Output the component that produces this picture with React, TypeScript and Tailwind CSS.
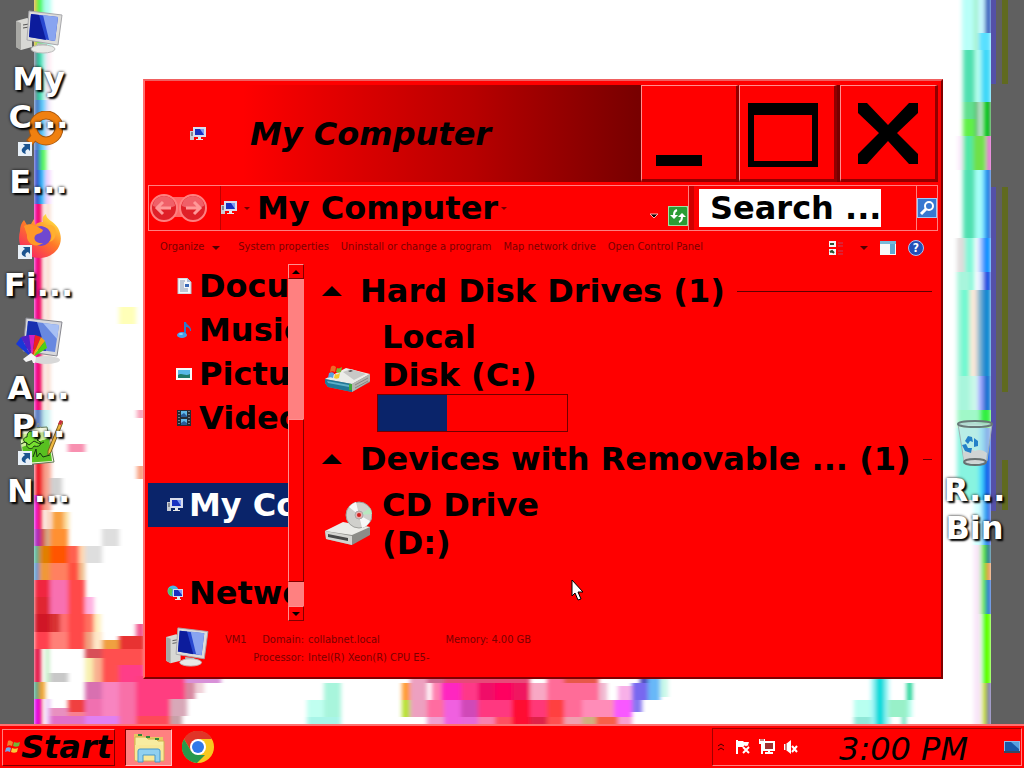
import type { ReactNode } from "react";

type Block = [number, number, number, number, string];

// x, y, width, height, colour
const blocks: Block[] = [
    // left edge
    [33, 0, 3, 50, "#ff9030"], [36, 0, 7, 50, "#40f850"], [43, 0, 8, 50, "#b0fff0"],
    [34, 50, 3, 50, "#602880"], [37, 50, 6, 50, "#20d8a8"], [43, 50, 3, 50, "#c0ffff"], [46, 50, 4, 50, "#ffe0ec"],
    [34, 100, 6, 50, "#4070c0"], [40, 100, 6, 50, "#60d0ff"], [46, 100, 4, 50, "#f0e0f8"],
    [34, 150, 6, 54, "#3444c8"], [40, 150, 6, 20, "#50f850"], [40, 170, 5, 34, "#30c0ff"], [46, 170, 4, 34, "#f0c8ff"],
    [34, 204, 2, 206, "#f010d0"], [36, 204, 6, 206, "#f00058"], [46, 204, 4, 206, "#f8d4c4"],
    [34, 410, 8, 22, "#5878c0"], [42, 410, 8, 22, "#c8f0f0"],
    [35, 432, 8, 78, "#f01020"], [43, 432, 8, 78, "#f8a490"],
    [34, 495, 3, 34, "#e800f0"], [37, 495, 5, 34, "#f01030"], [46, 510, 4, 19, "#f8c8b0"],
    [34, 529, 6, 18, "#a820c0"], [40, 529, 5, 18, "#d84030"], [45, 529, 5, 18, "#d0b090"], [50, 529, 18, 18, "#ff9030"],
    [34, 546, 5, 18, "#20b090"], [39, 546, 11, 18, "#e08000"], [50, 546, 18, 18, "#ff5500"], [68, 546, 11, 18, "#ff6050"], [79, 546, 6, 18, "#ffd8b0"],
    [34, 563, 5, 18, "#3090d0"], [39, 563, 11, 18, "#f09838"], [50, 563, 18, 18, "#ff8060"], [68, 563, 11, 18, "#ff5040"], [79, 563, 6, 18, "#f0c090"],
    [34, 580, 16, 18, "#f02840"], [50, 580, 18, 35, "#f870b0"], [68, 580, 17, 69, "#ff4848"], [85, 597, 9, 18, "#ffb0e0"],
    [34, 597, 16, 18, "#e02830"], [34, 614, 16, 18, "#d01828"], [50, 614, 10, 18, "#d83030"], [60, 614, 8, 18, "#ff7070"],
    [85, 614, 9, 18, "#ff7060"], [94, 614, 7, 18, "#fff0c0"],
    [34, 632, 16, 17, "#ff4050"], [50, 632, 18, 17, "#ff8078"], [85, 632, 8, 17, "#f0a080"], [93, 632, 9, 17, "#ffe8c8"],
    [102, 640, 17, 9, "#f0a040"], [119, 636, 26, 13, "#e83030"], [136, 624, 9, 12, "#f05890"],
    [34, 649, 7, 33, "#e01040"], [46, 649, 3, 33, "#b0e8b0"], [85, 649, 17, 9, "#d85058"], [85, 658, 8, 24, "#f8f0b0"], [93, 658, 9, 24, "#f8b090"],
    [102, 649, 43, 33, "#ff5050"], [119, 665, 26, 17, "#ff3c88"], [50, 673, 18, 9, "#c8c8c8"],
    [34, 682, 5, 17, "#20a080"], [39, 682, 6, 17, "#f0a020"], [34, 699, 5, 30, "#e000f0"], [39, 699, 3, 30, "#f01050"], [46, 699, 4, 30, "#e8c0f8"],
    [85, 682, 17, 17, "#d870b0"], [102, 682, 17, 34, "#f884c0"], [119, 682, 17, 47, "#f870a8"], [136, 676, 49, 23, "#ff3c80"],
    [185, 679, 36, 4, "#d890d8"], [185, 683, 10, 16, "#d888a0"], [195, 683, 9, 10, "#f0d0d8"],
    [50, 708, 18, 8, "#e890c0"], [68, 700, 17, 12, "#f04040"], [68, 712, 17, 4, "#f88090"], [85, 699, 17, 17, "#f070b0"],
    [136, 699, 34, 17, "#ff3c80"], [170, 699, 17, 17, "#d8a8b8"], [50, 716, 35, 13, "#e070c8"], [85, 716, 34, 13, "#e080f0"],
    [136, 716, 34, 13, "#ff4858"], [170, 716, 12, 13, "#c8a0a8"],
    // loose specks
    [119, 307, 17, 17, "#ffffb8"], [68, 444, 17, 8, "#f890b0"], [137, 410, 8, 8, "#f8a0b8"], [137, 466, 8, 13, "#f8a080"],
    [50, 478, 12, 17, "#d0d0d0"], [52, 512, 12, 17, "#f8a040"], [64, 512, 5, 17, "#fce0a0"], [102, 529, 17, 17, "#dedede"], [85, 546, 17, 17, "#dedede"],
    // bottom strip
    [324, 683, 17, 34, "#a8f5dc"], [307, 700, 17, 17, "#c0fff0"], [307, 717, 34, 12, "#a8f5e8"],
    [402, 683, 8, 17, "#ff9a30"], [402, 700, 8, 17, "#b8e030"], [410, 679, 17, 38, "#eda0c0"], [427, 679, 17, 4, "#d06890"],
    [432, 683, 9, 17, "#ff80b0"], [441, 683, 20, 17, "#ff28c0"], [461, 683, 17, 17, "#ff3888"], [444, 679, 86, 4, "#e84878"],
    [478, 683, 17, 17, "#f01068"], [495, 683, 17, 17, "#ff0060"], [512, 683, 18, 17, "#f01860"], [530, 683, 17, 17, "#f8a8c4"],
    [547, 679, 52, 21, "#ff6c98"], [599, 683, 8, 17, "#f0b8d0"], [564, 679, 34, 4, "#e85848"], [618, 686, 14, 14, "#f8b0e8"],
    [632, 683, 16, 17, "#7868f0"], [648, 679, 12, 21, "#68b8f8"], [640, 679, 8, 4, "#5048c0"], [660, 679, 8, 18, "#c8f8e8"],
    [427, 700, 17, 17, "#ff6ca0"], [444, 700, 17, 29, "#f060e0"], [461, 700, 17, 17, "#d048b8"], [478, 700, 34, 17, "#ff3880"],
    [512, 700, 18, 29, "#ff1030"], [530, 700, 17, 17, "#ff3878"], [547, 700, 17, 17, "#ff4040"], [564, 700, 18, 17, "#ff6c98"],
    [582, 700, 32, 17, "#ff8cb8"], [614, 700, 18, 17, "#f858ff"], [632, 700, 10, 12, "#8878f0"],
    [427, 717, 17, 12, "#f0a0d0"], [461, 717, 17, 12, "#e868d8"], [478, 717, 17, 12, "#f880b0"], [495, 717, 17, 12, "#ff5060"],
    [530, 717, 17, 12, "#e02048"], [547, 717, 17, 12, "#ff5050"], [564, 717, 18, 12, "#f0a0b0"], [582, 717, 14, 12, "#d0b080"],
    [596, 717, 22, 12, "#f86048"], [618, 717, 14, 12, "#f8a0d0"],
    [854, 700, 58, 17, "#b8fff0"], [854, 717, 36, 12, "#90e8d8"], [871, 679, 18, 50, "#a0f8f8"], [875, 679, 10, 50, "#10dcdc"],
    [888, 700, 20, 17, "#98f0c8"], [907, 683, 5, 17, "#18d090"], [902, 717, 4, 12, "#60e0b8"],
    // right edge
    [962, 0, 12, 50, "#b8fff8"], [974, 0, 4, 50, "#a0f0c8"], [978, 0, 7, 33, "#c8f8ff"], [985, 0, 6, 33, "#0848b8"], [979, 33, 12, 17, "#58e0ff"],
    [963, 50, 12, 52, "#50e0b0"], [975, 50, 6, 52, "#b8fff0"], [981, 50, 10, 52, "#40d8f8"],
    [963, 102, 12, 17, "#60e090"], [975, 102, 4, 34, "#60b870"], [979, 102, 3, 34, "#e0f0f0"], [982, 102, 7, 34, "#10d020"], [989, 102, 2, 34, "#104820"],
    [963, 119, 12, 17, "#60f048"], [958, 136, 5, 34, "#fce8fc"], [963, 136, 12, 34, "#50e8a8"], [973, 136, 13, 34, "#70e048"], [987, 136, 4, 34, "#d828c0"],
    [963, 170, 12, 68, "#50e0b0"], [975, 170, 8, 68, "#a8fff8"], [983, 170, 4, 68, "#30b8ff"], [987, 170, 4, 68, "#0850d0"],
    [957, 238, 8, 34, "#e0dcdc"], [965, 238, 9, 52, "#80f8d8"], [978, 238, 4, 34, "#c0d8ff"], [982, 238, 9, 34, "#1090ff"], [978, 272, 5, 18, "#d8e8ff"], [983, 272, 8, 18, "#1048e0"],
    [957, 272, 13, 138, "#a8f5dc"], [961, 290, 8, 86, "#70f8d0"], [970, 290, 7, 86, "#fce8d8"], [977, 290, 5, 86, "#80b8d0"], [982, 290, 9, 86, "#1088d0"],
    [970, 376, 7, 34, "#c8f8e8"], [978, 376, 5, 34, "#a0a8ff"], [983, 376, 8, 34, "#1070d0"],
    [957, 410, 34, 18, "#a0f8c8"], [980, 410, 11, 18, "#30f040"], [957, 428, 22, 72, "#88f4e0"], [979, 428, 5, 72, "#40d8ff"], [984, 428, 7, 72, "#1058e8"],
    [974, 500, 8, 45, "#d0ffff"], [982, 500, 5, 45, "#40b8f8"], [987, 500, 4, 45, "#2040e0"],
    [974, 545, 7, 184, "#f8e4f8"], [981, 545, 5, 69, "#60f030"], [986, 545, 5, 18, "#106088"], [986, 563, 5, 17, "#e88848"], [986, 580, 5, 34, "#0850d0"],
    [982, 614, 9, 69, "#60ff00"], [982, 683, 5, 46, "#c8e010"], [987, 683, 4, 46, "#5030a8"],
];

// dark side panels, kept crisp on top of the smeared blocks
const panels: Block[] = [
    [0, 0, 34, 768, "#606060"], [991, 0, 33, 768, "#606060"],
    [991, 0, 5, 84, "#5450a8"], [991, 187, 5, 324, "#5450a8"],
    [1002, 0, 6, 84, "#606a20"], [1002, 187, 6, 205, "#606a20"], [1002, 460, 6, 50, "#606a20"],
];

const Wallpaper = () => {
    return (
        <svg
            className="absolute inset-0 h-full w-full"
            viewBox="0 0 1024 768"
            preserveAspectRatio="none"
            shapeRendering="crispEdges"
            aria-hidden="true"
        >
            <filter id="smear" x="0" y="0" width="1" height="1">
                <feGaussianBlur stdDeviation="2 0" />
            </filter>
            <g filter="url(#smear)">
                {blocks.map(([x, y, w, h, fill], i) => (
                    <rect key={i} x={x} y={y} width={w} height={h} fill={fill} />
                ))}
            </g>
            {panels.map(([x, y, w, h, fill], i) => (
                <rect key={i} x={x} y={y} width={w} height={h} fill={fill} />
            ))}
        </svg>
    );
};

const ComputerIcon = ({ className }: { className: string }) => {
    return (
        <svg className={className} viewBox="0 0 48 44" aria-hidden="true">
            <path d="M1 11l11-3 5 2v27l-11 3-5-3z" fill="#d8d8d4" />
            <path d="M1 11l5 2v27l-5-3z" fill="#a8a8a4" />
            <path d="M8 15l6-1M8 18l6-1" stroke="#555" />
            <path d="M22 33l10 1v5H22z" fill="#b9bab8" />
            <ellipse cx="28" cy="39" rx="12" ry="4" fill="#e9e9e6" stroke="#bbb" />
            <path d="M14 1l33 4-4 30-31-5z" fill="#dcdcda" stroke="#a8a8ac" />
            <path d="M16 4l27 3-3 24-26-4z" fill="#2848d0" />
            <path d="M28 5l15 2-3 24-6-1z" fill="#88a4f0" />
            <path d="M16 4l8 1 7 25-17-3z" fill="#0c1c9c" />
        </svg>
    );
};

const SmallComputerIcon = () => {
    return (
        <svg className="h-4 w-4 shrink-0" viewBox="0 0 16 16" aria-hidden="true">
            <path d="M0 5h4v9H0z" fill="#c8ccd4" />
            <path d="M1 7h2M1 9h2" stroke="#445" />
            <path d="M3 1h13v10H3z" fill="#d8dcec" />
            <path d="M5 3h9v6H5z" fill="#1830c0" />
            <path d="M10 3h4v6z" fill="#7c9cf4" />
            <path d="M8 11h3v2h2v1H6v-1h2z" fill="#e8e8e8" />
        </svg>
    );
};

const NetworkIcon = () => {
    return (
        <svg className="h-4 w-4 shrink-0" viewBox="0 0 16 16" aria-hidden="true">
            <circle cx="6" cy="6" r="5.500" fill="#48b8e8" />
            <path d="M2 3c3 0 4 2 3 4s1 3 0 4C2 10 0 7 2 3z" fill="#58c850" />
            <path d="M6 4h10v8H6z" fill="#d8dcec" />
            <path d="M7 5h8v6H7z" fill="#1830c0" />
            <path d="M11 5h4v5z" fill="#7c9cf4" />
            <path d="M10 12h3v2h1v1H8v-1h2z" fill="#e8e8e8" />
        </svg>
    );
};

const DocumentIcon = () => {
    return (
        <svg className="h-4 w-4 shrink-0" viewBox="0 0 16 16" aria-hidden="true">
            <path d="M2 0h9l4 4v12H2z" fill="#f4f6fa" stroke="#b8c0cc" />
            <path d="M11 0v4h4z" fill="#b0c0d8" />
            <path d="M4 3h5M4 5h4M4 7h4M4 9h4M4 11h8M4 13h8" stroke="#8898b0" />
            <path d="M9 6h4v3H9z" fill="#3868b8" />
        </svg>
    );
};

const MusicIcon = () => {
    return (
        <svg className="h-4 w-4 shrink-0" viewBox="0 0 16 16" aria-hidden="true">
            <path d="M8 0h2c0 3 6 4 5 9h-1c0-3-2-4-4-4v8H8z" fill="#3078c8" />
            <ellipse cx="6" cy="13" rx="5" ry="3" fill="#48a0e8" />
            <ellipse cx="5" cy="12" rx="2" ry="1" fill="#90d0f8" />
        </svg>
    );
};

const PictureIcon = () => {
    return (
        <svg className="h-4 w-4 shrink-0" viewBox="0 0 16 16" aria-hidden="true">
            <path d="M0 2h16v12H0z" fill="#f8f8f8" />
            <path d="M2 4h12v8H2z" fill="#58b8e8" />
            <path d="M2 9c4-3 7 2 12-1v4H2z" fill="#207868" />
        </svg>
    );
};

const VideoIcon = () => {
    return (
        <svg className="h-4 w-4 shrink-0" viewBox="0 0 16 16" aria-hidden="true">
            <path d="M1 0h14v16H1z" fill="#282c34" />
            <path d="M5 1h6v6H5zM5 9h6v6H5z" fill="#60b8e8" />
            <path d="M5 5l3-2 3 3v1H5zM5 13l3-2 3 2v2H5z" fill="#285c98" />
            <path d="M3 1v14M13 1v14" stroke="#c8ccd0" strokeDasharray="1 2" />
        </svg>
    );
};

const HardDiskIcon = () => {
    return (
        <svg className="h-[30px] w-12 shrink-0" viewBox="0 0 48 30" aria-hidden="true">
            <path d="M1 15L20 6l26 5v7L28 28 4 23l-3-4z" fill="#8a8a88" />
            <path d="M1 15L22 4l24 6-18 10z" fill="#ecece8" />
            <path d="M19 8l8-3 15 5-12 6z" fill="#c8c8c6" />
            <path d="M24 7l3-1 2 1-3 1z" fill="#505050" />
            <path d="M28 20l18-10v7L28 28z" fill="#b4b4b0" />
            <path d="M31 21l13-7M31 24l13-7" stroke="#888884" />
            <path d="M1 15l27 5v8L4 23l-3-4z" fill="#207898" />
            <path d="M3 17l22 4v2L4 19z" fill="#60b0c8" />
            <path d="M25 20h3v6h-3z" fill="#40a838" />
            <path d="M7 3c2-2 3-1 5 0l-1 5c-2-1-3-1-5 0z" fill="#f06828" />
            <path d="M13 4c2 1 3 0 5-1l-1 5c-2 1-3 1-5 0z" fill="#78b830" />
            <path d="M5 9c2-1 3-1 5 0l-1 5c-2-1-3-1-5 0z" fill="#58a0e0" />
            <path d="M11 10c2 1 3 0 5-1l-1 5c-2 1-3 1-5 0z" fill="#f8c830" />
        </svg>
    );
};

const CdDriveIcon = () => {
    return (
        <svg className="h-[46px] w-12 shrink-0" viewBox="0 0 48 46" aria-hidden="true">
            <path d="M1 30l18-8 27 4v8L28 44 2 38z" fill="#8c8c88" />
            <path d="M1 30l18-9 27 5-18 8z" fill="#ecece8" />
            <path d="M1 30l27 5v9L2 38z" fill="#d4d4d0" />
            <path d="M4 33l20 4v3L4 36z" fill="#484848" />
            <circle cx="35" cy="14" r="13" fill="#d0d0cc" stroke="#a0a09c" />
            <path d="M35 14L25 6a13 13 0 0 1 7-5z" fill="#f8f8f8" />
            <path d="M35 14l11 6a13 13 0 0 1-8 7z" fill="#f8f8f8" />
            <path d="M35 14l11-7 2 6z" fill="#b8e8c0" />
            <circle cx="35" cy="14" r="4" fill="#e8b0b0" stroke="#aaa" />
            <circle cx="35" cy="14" r="2" fill="#d02020" />
        </svg>
    );
};

const Shortcut = () => {
    return (
        <g>
            <path d="M0 0h14v14H0z" fill="#e8f0f8" />
            <path d="M5 2h7v7l-2-2c-3 1-3 3-2 5-5-1-6-5-1-8z" fill="#1c5490" />
        </g>
    );
};

const EverythingIcon = () => {
    return (
        <svg className="h-12 w-12" viewBox="0 0 48 48" aria-hidden="true">
            <circle cx="31" cy="17" r="13" fill="none" stroke="#a85810" strokeWidth="9" />
            <path d="M21 24l-7 8" stroke="#a85810" strokeWidth="8" />
            <path d="M21 24l-6 7" stroke="#f08010" strokeWidth="6" />
            <circle cx="31" cy="17" r="13" fill="none" stroke="#f08010" strokeWidth="7" />
            <g transform="translate(3 31)"><Shortcut /></g>
        </svg>
    );
};

const FirefoxIcon = () => {
    return (
        <svg className="h-12 w-12" viewBox="0 0 48 48" aria-hidden="true">
            <defs>
                <linearGradient id="fox" x1="1" y1="0" x2="0.300" y2="1">
                    <stop offset="0.150" stopColor="#ffe040" />
                    <stop offset="0.550" stopColor="#ff7828" />
                    <stop offset="1" stopColor="#f82860" />
                </linearGradient>
            </defs>
            <path d="M9 6l3 5 4-1 3-5 1 6c3-3 6-3 8-3-1-4 0-6 3-8 0 6 8 7 12 14 8 15-2 29-17 30C10 45 1 32 5 17c0-4 1-8 4-11z" fill="url(#fox)" />
            <circle cx="26" cy="22" r="10" fill="#7048d0" />
            <path d="M9 12c5-3 10-1 14 1l5 3c-1 4-6 3-8 6-2 4 2 8 8 7-8 6-17 0-16-8z" fill="#ff9828" />
            <path d="M28 13c10 0 11 11 6 15 6-1 8-8 6-14-3-4-7-4-12-1z" fill="#ffb030" />
            <g transform="translate(3 31)"><Shortcut /></g>
        </svg>
    );
};

const AppearanceIcon = () => {
    return (
        <svg className="h-12 w-12" viewBox="0 0 48 48" aria-hidden="true">
            <ellipse cx="31" cy="43" rx="14" ry="4" fill="#d8d8d8" />
            <path d="M11 1l36 4-5 34-34-5z" fill="#d8d8dc" stroke="#888890" />
            <path d="M13 4l31 4-4 27-30-4z" fill="#6888e0" />
            <path d="M28 6l16 2-2 14z" fill="#a8c0f4" />
            <path d="M13 4l9 1 9 29-21-3z" fill="#1830b0" />
            <path d="M17 41L1 27l5-7z" fill="#1838d8" />
            <path d="M17 41L6 20l8-2z" fill="#5020c8" />
            <path d="M17 41l-3-23h6z" fill="#d020c0" />
            <path d="M17 41l3-23 6 2z" fill="#f02020" />
            <path d="M17 41l9-21 4 4z" fill="#f8a010" />
            <path d="M17 41l13-17 2 7z" fill="#50d010" />
            <path d="M8 42l8-6 5 4-1 6h-2l-1-3-6 2z" fill="#f4f4f4" />
        </svg>
    );
};

const NotepadIcon = () => {
    return (
        <svg className="h-12 w-12" viewBox="0 0 48 48" aria-hidden="true">
            <path d="M4 9l28-2 7 35-31 3z" fill="#f4f8e0" stroke="#607858" />
            <path d="M7 26l27-8 3 23-28 2z" fill="#58c020" />
            <path d="M6 14l25-2 3 6-27 9z" fill="#d0f098" />
            <path d="M6 10l2-5 3 4 2-5 3 5 2-5 3 4 2-5 3 5" fill="none" stroke="#909890" />
            <path d="M12 17c0-8 8-7 7-2 5-4 9 2 3 5 6 2 4 8-3 6-2 5-9 2-7-3-5-1-4-6 0-6z" fill="#78e030" stroke="#183810" />
            <path d="M6 24l4-2 4 3 5-4 6 3 4-2M18 37l3-8 1 8 3-4 3 4 7-2" fill="none" stroke="#183810" />
            <path d="M45 1l3 1-12 30-3 3v-4z" fill="#f0b840" stroke="#806020" />
            <path d="M45 0l3 1-2 4-3-1z" fill="#c83040" />
            <g transform="translate(3 31)"><Shortcut /></g>
        </svg>
    );
};

const RecycleBinIcon = () => {
    return (
        <svg className="h-12 w-12" viewBox="0 0 48 48" aria-hidden="true">
            <path d="M7 5h34l-5 37c-5 5-18 5-23 0z" fill="#d8e8ea" fillOpacity="0.600" stroke="#a0b0b4" />
            <path d="M12 34c5-4 9-4 12-2 4-2 8-1 12 2l-1 8c-5 4-17 4-22 0z" fill="#d0d4d4" />
            <ellipse cx="24" cy="5" rx="17" ry="3" fill="#b8e0d8" fillOpacity="0.700" stroke="#687878" strokeWidth="2" />
            <path d="M14 22l3-5 4 1 1 5-3-1-2 3zM23 19l4 3v5l-4 1v-4zM11 26l4-1 2 4h4l-1 5-6-2z" fill="#2480c8" />
            <ellipse cx="24" cy="43" rx="11" ry="3" fill="none" stroke="#687070" strokeWidth="2" />
        </svg>
    );
};

const DesktopIcon = ({ icon, label }: { icon: ReactNode; label: string }) => {
    return (
        <li className="h-[103px] w-[77px]">
            <button className="flex w-full flex-col items-center gap-1">
                {icon}
                <span className="relative z-10 w-full text-center text-[32px] leading-[38px] font-bold text-white [text-shadow:2px_2px_2px_#000,0_0_3px_#000]">
                    {label}
                </span>
            </button>
        </li>
    );
};

const captionButton =
    "flex w-[98px] items-center justify-center border-t border-l border-r-3 border-b-3 border-t-[#ff9090] border-l-[#ff9090] border-r-[#900000] border-b-[#900000] bg-[#ff0000] pt-1";

const TitleBar = () => {
    return (
        <header className="flex h-[97px] shrink-0 items-stretch bg-linear-to-r from-[#ff0000] from-12% via-[#b80000] via-41% to-[#780000] to-62%">
            <div className="flex flex-1 items-center gap-11 pl-[42px]">
                <SmallComputerIcon />
                <h1 className="text-[32px] leading-[38px] font-bold italic">My Computer</h1>
            </div>
            <button className={captionButton} aria-label="Minimize">
                <svg className="h-16 w-[70px]" viewBox="0 0 70 64" aria-hidden="true">
                    <path d="M2 52h46v11H2z" />
                </svg>
            </button>
            <button className={`${captionButton} pr-2`} aria-label="Maximize">
                <svg className="h-16 w-[70px]" viewBox="0 0 70 64" aria-hidden="true">
                    <path d="M0 0h70v64H0zM6 12v46h58V12z" fillRule="evenodd" />
                </svg>
            </button>
            <button className={`${captionButton} ml-[3px]`} aria-label="Close">
                <svg className="h-16 w-16" viewBox="0 0 64 64" aria-hidden="true">
                    <path d="M2 0h9l21 22L53 0h9v10L41 30l21 21v10h-9L32 38 11 61H2V51l21-21L2 10z" />
                </svg>
            </button>
        </header>
    );
};

const Caret = () => {
    return (
        <svg className="h-1 w-2 shrink-0" viewBox="0 0 8 4" aria-hidden="true">
            <path d="M0 0h8L4 4z" fill="#500000" />
        </svg>
    );
};

const SmallCaret = () => {
    return (
        <svg className="h-[3px] w-1.5 shrink-0" viewBox="0 0 6 3" aria-hidden="true">
            <path d="M0 0h6L3 3z" fill="#700000" />
        </svg>
    );
};

const NavBar = () => {
    return (
        <div className="mt-[3px] flex h-[46px] shrink-0 border border-[#ff8080]">
            <div className="flex w-[72px] items-center border-r border-[#c00000]">
                <svg className="h-8 w-[58px]" viewBox="0 0 58 32" aria-hidden="true">
                    <rect x="12" y="5" width="34" height="20" fill="#ff6868" />
                    <circle cx="15" cy="16" r="13" fill="#e02028" stroke="#ff8080" strokeWidth="2" />
                    <circle cx="44" cy="16" r="13" fill="#e02028" stroke="#ff8080" strokeWidth="2" />
                    <path d="M4 14a11 10 0 0 1 22 0q-11 5-22 0zM33 14a11 10 0 0 1 22 0q-11 5-22 0z" fill="#f06068" />
                    <path d="M22 16H9m5-6l-6 6 6 6M37 16h13m-5-6l6 6-6 6" fill="none" stroke="#ff9898" strokeWidth="3" />
                </svg>
            </div>
            <div className="flex flex-1 items-center border-r border-[#ff8080]">
                <SmallComputerIcon />
                <span className="flex w-5 justify-center">
                    <SmallCaret />
                </span>
                <span className="text-[32px] leading-[38px] font-bold">My Computer</span>
                <span className="flex w-3 justify-center">
                    <SmallCaret />
                </span>
                <div className="mt-4 ml-auto flex items-center gap-2">
                    <svg className="h-2 w-3" viewBox="0 0 12 8" aria-hidden="true">
                        <path d="M2 2h8L6 6z" stroke="#ffb0b0" />
                    </svg>
                    <button aria-label="Refresh">
                        <svg className="h-5 w-5" viewBox="0 0 20 20" aria-hidden="true">
                            <rect width="20" height="20" rx="2" fill="#2c9c34" stroke="#a0e0a0" strokeWidth="2" />
                            <path d="M9 4Q6 5 6 9v2M11 16q3-1 3-5V9" fill="none" stroke="#fff" strokeWidth="2" />
                            <path d="M2 9h8l-4 4zM10 11h8l-4-4z" fill="#fff" />
                        </svg>
                    </button>
                </div>
            </div>
            <div className="flex w-[248px] items-center border-l-5 border-[#d00000] pl-[5px]">
                <input
                    aria-label="Search My Computer"
                    placeholder="Search ..."
                    className="h-[38px] w-[182px] bg-white pl-[11px] text-[32px] font-bold outline-none placeholder:text-black"
                />
                <button className="ml-auto h-full border-l border-[#ff8080]" aria-label="Search">
                    <svg className="h-5 w-5" viewBox="0 0 20 20" aria-hidden="true">
                        <rect width="20" height="20" rx="1" fill="#3878d0" stroke="#a0c8f8" strokeWidth="2" />
                        <circle cx="12" cy="8" r="4" fill="none" stroke="#fff" strokeWidth="2" />
                        <path d="M9 11l-5 5" stroke="#fff" strokeWidth="3" />
                    </svg>
                </button>
            </div>
        </div>
    );
};

const ToolBar = () => {
    return (
        <div className="flex h-[33px] shrink-0 items-center gap-3 pr-3.5 pl-3 font-['DejaVu_Sans_Condensed','DejaVu_Sans',sans-serif] text-[11px] whitespace-nowrap text-[#7a0000]">
            <button className="mr-1.5 flex items-center gap-2">
                Organize <Caret />
            </button>
            <button>System properties</button>
            <button>Uninstall or change a program</button>
            <button>Map network drive</button>
            <button>Open Control Panel</button>
            <div className="ml-auto flex items-center gap-3">
                <button className="flex items-center gap-4" aria-label="Change your view">
                    <svg className="h-4 w-4" viewBox="0 0 16 16" aria-hidden="true">
                        <path d="M1 1h7v6H1zM1 9h7v6H1z" fill="#f4f4f4" />
                        <path d="M2 4h4M2 12l2-1 2 2" stroke="#305030" strokeWidth="2" />
                        <path d="M10 3h5M10 6h5M10 11h5M10 14h5" stroke="#c04060" />
                    </svg>
                    <Caret />
                </button>
                <button aria-label="Show the preview pane">
                    <svg className="h-4 w-4" viewBox="0 0 16 16" aria-hidden="true">
                        <path d="M0 1h16v14H0z" fill="#f8f8f8" />
                        <path d="M0 1h16v3H0z" fill="#78b8d8" />
                        <path d="M10 4h5v10h-5z" fill="#60a8d0" />
                    </svg>
                </button>
                <button aria-label="Get help" className="flex h-4 w-4 items-center justify-center rounded-full border border-[#b0c0f0] bg-[#2450b8] text-[12px] leading-none font-bold text-white">
                    ?
                </button>
            </div>
        </div>
    );
};

const SideItem = ({ icon, label }: { icon: ReactNode; label: string }) => {
    return (
        <li className="flex h-11 items-center gap-[7px] pl-7">
            {icon}
            {label}
        </li>
    );
};

const scrollButton =
    "flex h-[15px] shrink-0 items-center justify-center border border-t-[#ff9090] border-l-[#ff9090] border-r-[#800000] border-b-[#800000] bg-[#ff0000]";

const SideBar = () => {
    return (
        <div className="flex w-[156px] shrink-0">
            <ul className="flex-1 overflow-hidden text-[32px] leading-[38px] font-bold whitespace-nowrap">
                <SideItem icon={<DocumentIcon />} label="Documents" />
                <SideItem icon={<MusicIcon />} label="Music" />
                <SideItem icon={<PictureIcon />} label="Pictures" />
                <SideItem icon={<VideoIcon />} label="Videos" />
                <li className="mt-[43px] flex h-11 items-center gap-[6px] bg-[#0a246a] pl-[19px] text-white">
                    <SmallComputerIcon />
                    My Computer
                </li>
                <li className="mt-11 flex h-11 items-center gap-[6px] pl-[19px]">
                    <NetworkIcon />
                    Network
                </li>
            </ul>
            <div className="flex w-4 flex-col bg-[#ff8080]">
                <button className={scrollButton} aria-label="Scroll up">
                    <svg className="h-1 w-2" viewBox="0 0 8 4" aria-hidden="true">
                        <path d="M0 4h8L4 0z" />
                    </svg>
                </button>
                <div className="flex-1" />
                <div className="h-[163px] border border-t-[#ff9090] border-l-[#ff9090] border-r-[#800000] border-b-[#800000] bg-[#ff0000]" />
                <div className="h-6" />
                <button className={scrollButton} aria-label="Scroll down">
                    <svg className="h-1 w-2" viewBox="0 0 8 4" aria-hidden="true">
                        <path d="M0 0h8L4 4z" />
                    </svg>
                </button>
            </div>
        </div>
    );
};

const GroupHeader = ({ title }: { title: string }) => {
    return (
        <h2 className="flex items-center whitespace-nowrap">
            <svg className="mr-[18px] h-[10px] w-5" viewBox="0 0 20 10" aria-hidden="true">
                <path d="M0 10h20L10 0z" />
            </svg>
            {title}
            <span className="ml-3 h-px flex-1 bg-[#600000]" />
        </h2>
    );
};

const Drives = () => {
    return (
        <main className="flex flex-1 flex-col gap-2 overflow-hidden pt-2 pr-1.5 pl-[18px] text-[32px] leading-[38px] font-bold">
            <GroupHeader title="Hard Disk Drives (1)" />
            <div className="flex gap-[5px] pl-0.5">
                <div className="pt-[46px]">
                    <HardDiskIcon />
                </div>
                <div>
                    <p className="w-[170px] pl-[5px]">Local Disk (C:)</p>
                    <div className="h-[38px] w-[191px] border border-[#700000]">
                        <div className="h-full w-[69px] bg-[#0a246a]" />
                    </div>
                </div>
            </div>
            <GroupHeader title="Devices with Removable ... (1)" />
            <div className="flex items-center gap-2.5 pl-0.5">
                <CdDriveIcon />
                <p className="w-[170px]">CD Drive (D:)</p>
            </div>
        </main>
    );
};

const Details = () => {
    return (
        <div className="flex h-[54px] shrink-0 gap-4 pt-1.5 pl-[17px] font-['DejaVu_Sans_Condensed','DejaVu_Sans',sans-serif] text-[11px] leading-[18px] whitespace-nowrap text-[#7a0000]">
            <ComputerIcon className="h-10 w-11" />
            <dl className="grid grid-cols-[79px_1fr] content-start gap-x-1 pt-1">
                <dt className="flex justify-between">
                    <span>VM1</span>Domain:
                </dt>
                <dd>collabnet.local</dd>
                <dt className="text-right">Processor:</dt>
                <dd>Intel(R) Xeon(R) CPU E5-</dd>
            </dl>
            <p className="pt-1">Memory: 4.00 GB</p>
        </div>
    );
};

const Window = () => {
    return (
        <section className="absolute top-[79px] right-[81px] bottom-[45px] left-[143px] flex flex-col border-2 border-t-[#f06060] border-r-[#800000] border-b-[#800000] border-l-[#ff7070] bg-[#ff0000] p-[3px] pt-1">
            <TitleBar />
            <NavBar />
            <ToolBar />
            <div className="flex h-[357px] shrink-0">
                <SideBar />
                <Drives />
            </div>
            <Details />
        </section>
    );
};

const TaskBar = () => {
    return (
        <footer className="relative flex h-11 shrink-0 items-center border-t-2 border-[#ff7070] bg-[#ff0000] px-0.5 text-[32px] leading-[38px]">
            <button className="flex h-[37px] w-[113px] items-center border border-t-[#ff8080] border-r-[#800000] border-b-[#800000] border-l-[#ff8080] pl-0.5 font-bold italic">
                <svg className="h-4 w-4 shrink-0" viewBox="0 0 16 16" aria-hidden="true">
                    <path d="M3 2c2-1 3 0 5 1L7 7C5 6 4 6 2 7z" fill="#f08030" />
                    <path d="M9 3c2 1 4 1 6 0l-1 4c-2 1-4 1-6 0z" fill="#70b838" />
                    <path d="M1 9c2-1 3-1 5 0l-1 4c-2-1-3-1-5 0z" fill="#70a8e8" />
                    <path d="M7 9c2 1 4 1 6 0l-1 4c-2 1-4 1-6 0z" fill="#f8c838" />
                </svg>
                Start
            </button>
            <button className="ml-2.5 flex h-[37px] w-[47px] items-center justify-center border border-t-[#800000] border-r-[#ffc0c0] border-b-[#ffc0c0] border-l-[#800000] bg-[#ff8080]" aria-label="Windows Explorer">
                <svg className="h-8 w-8" viewBox="0 0 32 32" aria-hidden="true">
                    <path d="M1 3h8l2 3h19v24H2z" fill="#e8c860" />
                    <path d="M2 6h11l2 2h8l2 2h6v20H2z" fill="#f8eca0" stroke="#d0b050" />
                    <path d="M5 4h4M13 6h4M22 8h4" stroke="#308838" strokeWidth="2" />
                    <path d="M2 14h28v15H2z" fill="#f8e898" />
                    <path d="M5 31V20q0-2 2-2h18q2 0 2 2v11h-5v-7H10v7z" fill="#90d0f0" stroke="#4898c8" />
                </svg>
            </button>
            <button className="ml-2.5" aria-label="Google Chrome">
                <svg className="h-8 w-8" viewBox="0 0 32 32" aria-hidden="true">
                    <circle cx="16" cy="16" r="16" fill="#f8c820" />
                    <path d="M2 8a16 16 0 0 1 28 0H16l-7 12z" fill="#e03428" />
                    <path d="M2 8l7 12 7 4h7l-8 8A16 16 0 0 1 2 8z" fill="#28984c" />
                    <circle cx="16" cy="16" r="8" fill="#fff" />
                    <circle cx="16" cy="16" r="6" fill="#3078e8" />
                </svg>
            </button>
            <div className="ml-auto flex h-[38px] items-center border border-t-[#a00000] border-r-[#ff8080] border-b-[#ff8080] border-l-[#a00000] pl-1">
                <button aria-label="Show hidden icons">
                    <svg className="h-2 w-2" viewBox="0 0 8 8" aria-hidden="true">
                        <path d="M1 3l3-2 3 2M1 7l3-2 3 2" fill="none" stroke="#400000" />
                    </svg>
                </button>
                <div className="ml-2.5 flex gap-2">
                    <svg className="h-4 w-4" viewBox="0 0 16 16" aria-label="Action Center">
                        <path d="M1 1h2v14H1zM3 2h5l1 1h5l-1 3 1 3H9L8 8H3z" fill="#fff" />
                        <path d="M8 8l6 6M14 8l-6 6" stroke="#f00" strokeWidth="5" />
                        <path d="M8 8l6 6M14 8l-6 6" stroke="#fff" strokeWidth="2" />
                    </svg>
                    <svg className="h-4 w-4" viewBox="0 0 16 16" aria-label="Network">
                        <path d="M5 3h10v8H5zM10 11v3M6 14h8" fill="#a03030" stroke="#fff" strokeWidth="2" />
                        <path d="M0 0h6v5H4v10H2V5H0z" fill="#fff" />
                        <path d="M2 0v2M4 0v2" stroke="#900" />
                    </svg>
                    <svg className="h-4 w-4" viewBox="0 0 16 16" aria-label="Volume muted">
                        <path d="M1 5h2l5-4v14l-5-4H1z" fill="#fff" />
                        <path d="M3 5v6" stroke="#900" />
                        <path d="M9 7l5 6M14 7l-5 6" stroke="#fff" strokeWidth="2" />
                    </svg>
                </div>
                <time className="ml-10 pt-1 italic">3:00 PM</time>
                <svg className="mr-[1px] ml-9 h-4 w-4" viewBox="0 0 16 16" aria-label="Show desktop">
                    <path d="M0 2h16v12H0z" fill="#90b8e8" />
                    <path d="M1 3h14v9H1z" fill="#1858a8" />
                    <path d="M7 3h8v7z" fill="#58a0e0" />
                    <path d="M0 12h16v2H0z" fill="#384860" />
                </svg>
            </div>
        </footer>
    );
};

const App = () => {
    return (
        <div className="relative flex h-screen flex-col overflow-hidden bg-white font-['DejaVu_Sans',Verdana,sans-serif] text-black">
            <Wallpaper />
            <div className="relative flex flex-1 justify-between">
                <ul className="pt-2">
                    <DesktopIcon icon={<ComputerIcon className="h-12 w-12 py-0.5" />} label="My C..." />
                    <DesktopIcon icon={<EverythingIcon />} label="E..." />
                    <DesktopIcon icon={<FirefoxIcon />} label="Fi..." />
                    <DesktopIcon icon={<AppearanceIcon />} label="A... P..." />
                    <DesktopIcon icon={<NotepadIcon />} label="N..." />
                </ul>
                <ul className="pt-[419px] pr-[11px]">
                    <DesktopIcon icon={<RecycleBinIcon />} label="R... Bin" />
                </ul>
                <Window />
                <svg className="absolute top-[579px] left-[571px] h-[22px] w-3" viewBox="0 0 12 22" aria-hidden="true">
                    <path d="M1 1v16l3-3 3 7 3-1-3-7h5z" fill="#fff" stroke="#000" />
                </svg>
            </div>
            <TaskBar />
        </div>
    );
};

export default App;
